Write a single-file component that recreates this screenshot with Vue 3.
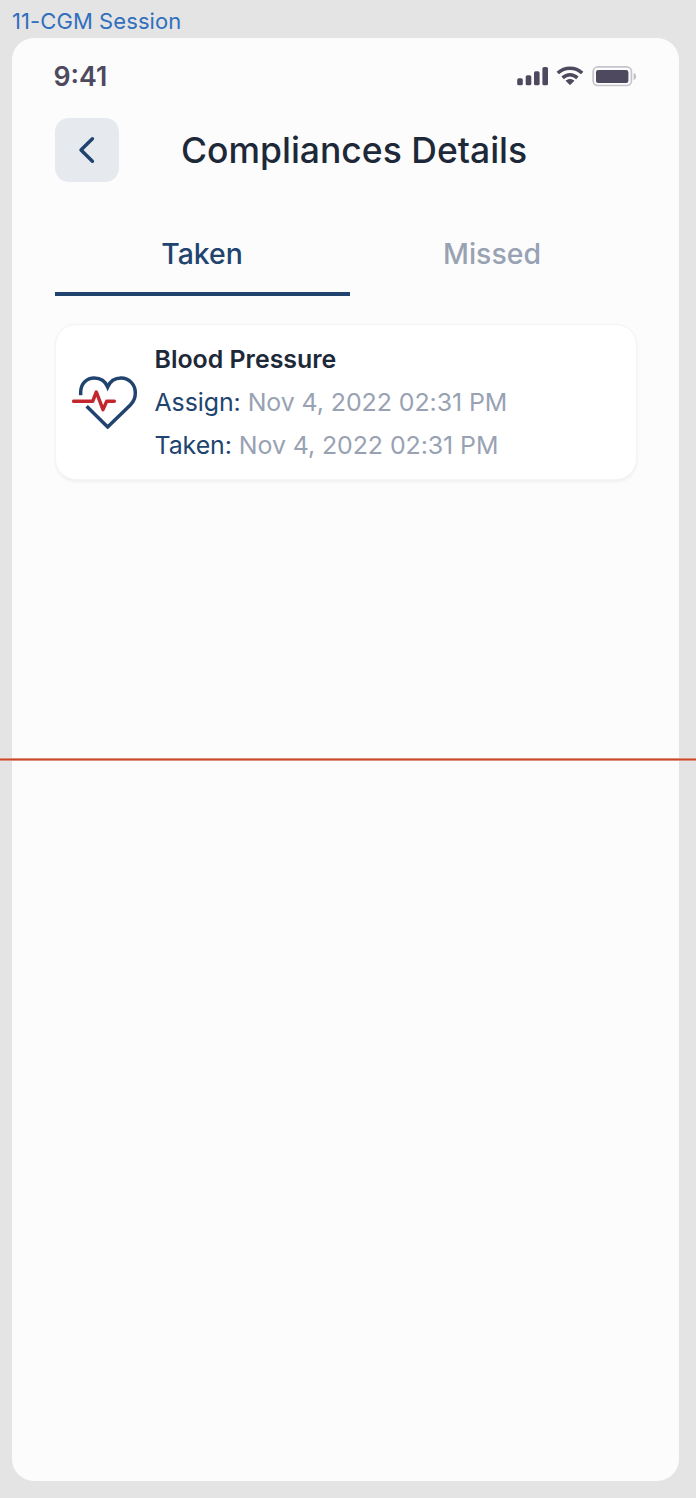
<script setup>
const tabs = [
  { label: 'Taken', active: true },
  { label: 'Missed', active: false },
]
const entries = [
  { key: 'Assign:', value: 'Nov 4, 2022 02:31 PM' },
  { key: 'Taken:', value: 'Nov 4, 2022 02:31 PM' },
]
</script>

<template>
  <div class="canvas">
    <div class="frame-label"><span class="t-frame">11-CGM Session</span></div>
    <main class="screen">
      <div class="status">
        <span class="time">9:41</span>
        <svg class="status-icons" width="120" height="22" viewBox="0 0 120 22">
          <g fill="#4e495e">
            <rect x="0.2" y="13.3" width="5.6" height="7" rx="1.6" />
            <rect x="8.7" y="10.3" width="5.6" height="10" rx="1.6" />
            <rect x="17" y="6.3" width="5.6" height="14" rx="1.6" />
            <rect x="25.4" y="1.9" width="5.6" height="18.4" rx="1.6" />
            <path d="M49 15.7 Q53 12.9 57 15.7 L53 19.7 Z" stroke="#4e495e" stroke-width="0.8" stroke-linejoin="round" />
            <rect x="79" y="5" width="32.4" height="13" rx="2.2" />
          </g>
          <g fill="none" stroke="#4e495e" stroke-width="3.5">
            <path d="M40.8 8 Q46 3.2 53 3.2 T65.2 8" />
            <path d="M45.6 12.9 Q49 9.8 53 9.8 T60.4 12.9" />
          </g>
          <rect x="76.2" y="1.9" width="38.2" height="18.6" rx="4.6" fill="none" stroke="#c5c3cb" stroke-width="1.7" />
          <path d="M116.6 7.8 Q119.1 9 119.1 11.4 T116.6 15 Z" fill="#bebcc6" />
        </svg>
      </div>

      <header class="header">
        <button class="back" aria-label="Back">
          <svg width="64" height="64" viewBox="0 0 64 64">
            <path d="M37.4 20.8 L26 32 L37.4 43.2" fill="none" stroke="#20446f" stroke-width="3.5" stroke-linecap="round" stroke-linejoin="round" />
          </svg>
        </button>
        <h1 class="title">Compliances Details</h1>
      </header>

      <nav class="tabs">
        <div v-for="tab in tabs" :key="tab.label" class="tab" :class="{ active: tab.active }">
          <span>{{ tab.label }}</span>
        </div>
      </nav>

      <section class="card">
        <svg class="heart" width="66" height="54" viewBox="36 46 198 162" fill="none">
          <path
            d="M62 107 V96 C63 72 80 55 103 55 C122 55 136 65 143 82 C150 65 164 55 183 55 C208 55 226 75 226 100 C226 115 220 127 211 136 L143 202 L80 140"
            stroke="#21446f" stroke-width="10.4" />
          <path d="M41 125 H98 L109 97 L129 150 L140 125 H163" stroke="#c4262e" stroke-width="10.4" stroke-linecap="round" stroke-linejoin="round" />
        </svg>
        <div class="details">
          <div class="name"><span>Blood Pressure</span></div>
          <div v-for="entry in entries" :key="entry.key" class="row">
            <span class="key">{{ entry.key }}</span>&nbsp;<span class="value">{{ entry.value }}</span>
          </div>
        </div>
      </section>
    </main>
    <div class="guide"></div>
  </div>
</template>

<style>
body {
  background: #e4e4e4;
}
</style>

<style scoped>
.canvas {
  position: relative;
  box-sizing: border-box;
  width: 696px;
  height: 1498px;
  padding-left: 12px;
  overflow: hidden;
  background: #e4e4e4;
  font-family: Inter, "Liberation Sans", sans-serif;
}
.frame-label {
  height: 38px;
  line-height: 42px;
  font-size: 22px;
  letter-spacing: 0.08px;
  color: #316fbe;
}
.screen {
  box-sizing: border-box;
  width: 666.5px;
  height: 1443px;
  padding: 24px 41px 0 42.5px;
  border-radius: 22px;
  background: #fcfcfc;
}
.status {
  display: flex;
  justify-content: space-between;
  align-items: center;
  height: 28px;
}
.time {
  margin-left: -1px;
  font-size: 26.7px;
  line-height: 28px;
  font-weight: 600;
  color: #4e495e;
}
.status-icons {
  display: block;
  margin-right: 1px;
}
.header {
  display: flex;
  align-items: center;
  margin-top: 28px;
  height: 64px;
}
.back {
  width: 64px;
  height: 64px;
  padding: 0;
  border: 0;
  border-radius: 14px;
  background: #e6eaef;
}
.back svg {
  display: block;
}
.title {
  margin: 0 0 0 62.5px;
  padding-top: 1px;
  font-size: 35.5px;
  line-height: 44px;
  font-weight: 500;
  color: #1d2939;
  white-space: nowrap;
}
.tabs {
  display: flex;
  width: 583px;
  height: 78px;
  margin-top: 36px;
}
.tab {
  box-sizing: border-box;
  width: 295px;
  height: 78px;
  padding-top: 18px;
  text-align: center;
  font-size: 28.4px;
  line-height: 36px;
  font-weight: 500;
  color: #98a2b3;
}
.tab + .tab {
  width: 285px;
}
.tab.active {
  border-bottom: 4px solid #21446f;
  color: #21446f;
}
.card {
  box-sizing: border-box;
  display: flex;
  width: 582.5px;
  height: 156px;
  margin-top: 28px;
  padding: 13px 16px 0;
  border: 1.6px solid #f2f4f7;
  border-radius: 21px;
  background: #fff;
  box-shadow: 0 1.8px 3.6px rgba(16, 24, 40, 0.05);
}
.heart {
  margin-top: 37px;
}
.details {
  margin-left: 17px;
  font-size: 24.9px;
  white-space: nowrap;
}
.name,
.row {
  height: 43px;
  line-height: 43px;
}
.name {
  font-weight: 600;
  color: #1d2939;
}
.row {
  letter-spacing: -0.06px;
}
.key {
  color: #21446f;
}
.value {
  color: #98a2b3;
}
.guide {
  position: absolute;
  left: 0;
  top: 758px;
  width: 696px;
  height: 3px;
  background: linear-gradient(#e08f7a 0 1px, #c9482b 1px 2px, #e08f7a 2px 3px);
}
</style>
